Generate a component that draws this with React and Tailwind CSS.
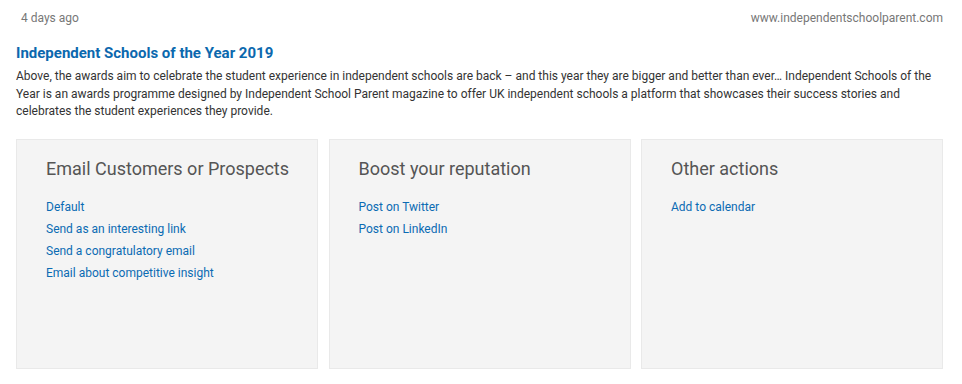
export default function App() {
  const cards = [
    {
      title: 'Email Customers or Prospects',
      links: ['Default', 'Send as an interesting link', 'Send a congratulatory email', 'Email about competitive insight'],
    },
    { title: 'Boost your reputation', links: ['Post on Twitter', 'Post on LinkedIn'] },
    { title: 'Other actions', links: ['Add to calendar'] },
  ]

  return (
    <div className="w-[962px] h-[384px] bg-white pl-4 pr-[19px] pt-[10px] font-['Roboto',sans-serif]">
      {/* Meta row */}
      <div className="flex items-center justify-between text-[12px] leading-4 text-[#777]">
        <span className="pl-[5px]">4 days ago</span>
        <span>www.independentschoolparent.com</span>
      </div>

      {/* Article */}
      <h2 className="mt-[17px] text-[15px] leading-5 font-bold text-[#0b68ae]">Independent Schools of the Year 2019</h2>
      <p className="mt-[5px] text-[12px] leading-[17.5px] text-[#333]">
        Above, the awards aim to celebrate the student experience in independent schools are back – and this year they are bigger and better than ever… Independent Schools of the Year is an awards programme designed by Independent School Parent magazine to offer UK independent schools a platform that showcases their success stories and celebrates the student experiences they provide.
      </p>

      {/* Action cards */}
      <div className="mt-[18px] grid grid-cols-3 gap-[10.5px]">
        {cards.map((card) => (
          <div key={card.title} className="h-[230px] bg-[#f4f4f4] border border-[#e9e9e9] pl-[29px] pt-[17px]">
            <h3 className="text-[18px] leading-6 text-[#555]">{card.title}</h3>
            <ul className="mt-[15px] flex flex-col">
              {card.links.map((link) => (
                <li key={link} className="text-[12px] leading-[22px] text-[#0b6bb3]">
                  <a href="#">{link}</a>
                </li>
              ))}
            </ul>
          </div>
        ))}
      </div>
    </div>
  )
}
